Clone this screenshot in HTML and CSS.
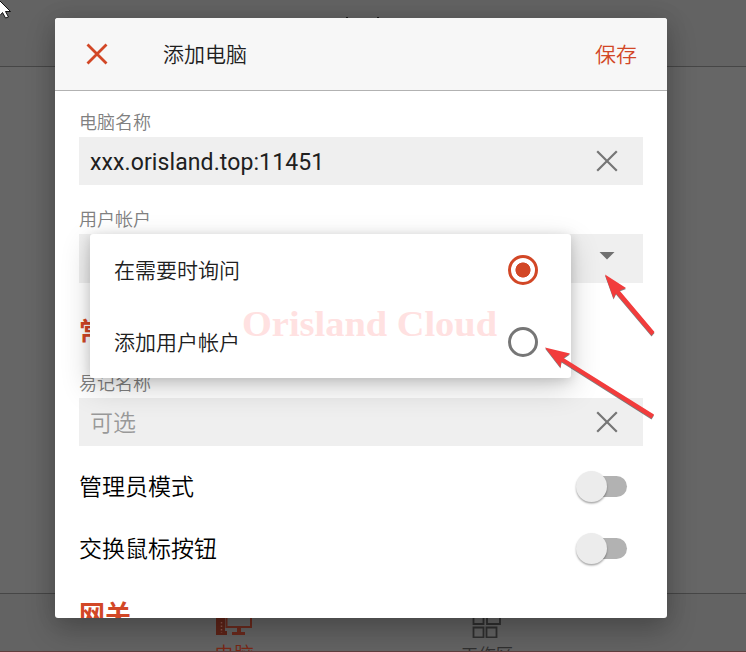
FILE: index.html
```
<!DOCTYPE html>
<html lang="zh-CN">
<head>
<meta charset="utf-8">
<title>添加电脑</title>
<link rel="stylesheet" href="styles.css">
</head>
<body>
<div class="app">
  <header class="app-bar"><i class="tick"></i><i class="tick"></i></header>
  <main class="app-main"></main>
  <nav class="app-nav">
    <div class="tab tab-active">
      <svg class="tab-icon" width="38" height="30" viewBox="0 0 38 30"><path fill="#5e2418" d="M1 0h9v23h2v4H1z"/><path fill="none" stroke="#6b2a1d" stroke-width="2" d="M11.500 4v15H36V4z"/><path fill="#6b2a1d" d="M22 20h4v4h4v3H17v-3h5z"/><path stroke="#8a5549" stroke-width="1.500" stroke-dasharray="1.500 2" d="M6.500 14v11"/></svg>
      <span>电脑</span>
    </div>
    <div class="tab">
      <svg class="tab-icon" width="34" height="30" viewBox="0 0 34 30"><path fill="none" stroke="#303030" stroke-width="1.800" d="M3.500 6h10v10h-10zM17 6h13v10H17zM3.500 19.500h10v10h-10zM16.500 19.500h10v10h-10z"/></svg>
      <span>工作区</span>
    </div>
  </nav>
</div>

<section class="dialog">
  <header class="dialog-head">
    <svg class="close" width="22" height="22" viewBox="0 0 22 22"><path d="M1.500 1.500l19 19m0-19l-19 19" stroke="#d24726" stroke-width="2.800" fill="none"/></svg>
    <h1>添加电脑</h1>
    <span class="save">保存</span>
  </header>
  <div class="dialog-body">
    <div class="label">电脑名称</div>
    <div class="field"><span class="address">xxx.orisland.top:11451</span><svg class="clear" width="22" height="22" viewBox="0 0 22 22"><path d="M1.200 1.200l19.600 19.600m0-19.600l-19.600 19.600"/></svg></div>
    <div class="label label-account">用户帐户</div>
    <div class="field select"><svg class="caret" width="16" height="8" viewBox="0 0 16 8"><path d="M.5 0h15L8 7.500z" fill="#707070"/></svg></div>
    <h2 class="general">常</h2>
    <div class="label">易记名称</div>
    <div class="field"><span class="hint">可选</span><svg class="clear" width="22" height="22" viewBox="0 0 22 22"><path d="M1.200 1.200l19.600 19.600m0-19.600l-19.600 19.600"/></svg></div>
    <div class="setting setting-first"><span>管理员模式</span><span class="switch"><i class="knob"></i></span></div>
    <div class="setting"><span>交换鼠标按钮</span><span class="switch"><i class="knob"></i></span></div>
    <h2 class="gateway">网关</h2>
  </div>
</section>

<div class="menu">
  <div class="option"><span>在需要时询问</span><i class="radio radio-on"></i></div>
  <div class="option"><span>添加用户帐户</span><i class="radio"></i></div>
</div>

<svg class="overlay" width="746" height="652" viewBox="0 0 746 652">
  <text class="watermark" x="242" y="335.500" textLength="255" lengthAdjust="spacingAndGlyphs">Orisland Cloud</text>
  <g class="arrow">
    <path d="M605 274.500L626 288l-6.500 2.500L654.500 332l-3 3.500L616 293.500l-2.500 5z"/>
    <path d="M545 347.500l25 6-6.500 4.500 90.500 56.500-2.500 4L561.500 361.500l-1 6z"/>
  </g>
  <path class="cursor" d="M-8 -7L10.500 11.500H5.500L8.500 17 5.500 18 2.500 12.500 0 15.500H-8z"/>
</svg>
</body>
</html>
```
FILE: styles.css
```
* { box-sizing: border-box; }
body {
  margin: 0;
  width: 746px;
  height: 652px;
  overflow: hidden;
  position: relative;
  font-family: Roboto, "Noto Sans CJK SC", sans-serif;
  font-weight: 350;
  color: #202020;
}
.app {
  display: flex;
  flex-direction: column;
  height: 652px;
  background: #666;
}
.app-bar {
  display: flex;
  gap: 29px;
  height: 67px;
  padding: 17px 0 0 346px;
  background: #636363;
  border-bottom: 1px solid #464646;
}
.tick { width: 2px; height: 1px; background: #171717; }
.app-main { flex: 1; }
.app-nav {
  display: flex;
  height: 59px;
  background: #636363;
  border-top: 1px solid #464646;
  border-bottom: 1px solid #603e3e;
  padding-left: 108px;
  overflow: hidden;
}
.tab {
  display: flex;
  flex-direction: column;
  align-items: center;
  width: 252px;
  padding-top: 14px;
  font-size: 20px;
  line-height: 34px;
  color: #303030;
}
.tab + .tab { width: 254px; font-size: 17.500px; }
.tab-active { color: #7a2715; }
.tab-icon { flex: none; }
.dialog {
  position: absolute;
  left: 55px;
  top: 18px;
  width: 612px;
  height: 600px;
  border-radius: 3px;
  background: #fff;
  box-shadow: 0 12px 30px rgba(0, 0, 0, .24), 0 0 22px rgba(0, 0, 0, .1);
}
.dialog-head {
  display: flex;
  align-items: center;
  height: 73px;
  padding: 0 30px 0 31px;
  background: #f7f7f7;
  border-bottom: 1px solid #b2b2b2;
  border-radius: 3px 3px 0 0;
}
h1, h2 { margin: 0; }
h1 { margin-left: 55px; flex: 1; font-size: 21px; font-weight: inherit; padding-bottom: 2px; }
.save { font-size: 21px; color: #d24726; padding-bottom: 2px; }
.dialog-body {
  height: 527px;
  padding: 18px 24px 0;
  overflow: hidden;
}
.label {
  height: 28px;
  font-size: 18px;
  line-height: 27px;
  color: #808080;
}
.label-account { margin-top: 21px; }
.field {
  display: flex;
  align-items: center;
  justify-content: space-between;
  height: 48px;
  padding: 0 25px 0 11px;
  font-size: 23px;
  font-weight: 400;
  background: #efefef;
}
.address { letter-spacing: .1px; padding-top: 2px; }
.select { height: 49px; justify-content: flex-end; padding: 0 28px 6px 0; }
.clear { margin-bottom: 1px; }
.clear path { stroke: #767676; stroke-width: 2.200; }
.hint { color: #999; font-weight: 350; padding-bottom: 2px; }
h2 { font-size: 26px; line-height: 36px; font-weight: 700; color: #d24726; }
.general { margin: 31px 0 20px; }
.gateway { margin-top: 18px; }
.setting {
  display: flex;
  align-items: center;
  justify-content: space-between;
  height: 62px;
  padding-right: 16px;
  font-size: 23px;
  color: #000;
}
.setting > span:first-child { padding-bottom: 2px; }
.setting-first { margin-top: 9px; }
.switch {
  display: flex;
  align-items: center;
  width: 48px;
  height: 21px;
  border-radius: 11px;
  background: #b2b2b2;
}
.knob {
  width: 31px;
  height: 31px;
  margin-left: -3px;
  border-radius: 50%;
  background: #ececec;
  box-shadow: 0 1.500px 2px rgba(0, 0, 0, .35);
}
.menu {
  position: absolute;
  left: 90px;
  top: 234px;
  width: 481px;
  height: 144px;
  border-radius: 3px;
  background: #fff;
  box-shadow: 0 10px 30px rgba(0, 0, 0, .19), 0 2px 12px rgba(0, 0, 0, .15);
}
.option {
  display: flex;
  align-items: center;
  justify-content: space-between;
  height: 72px;
  padding: 0 33px 0 24px;
  font-size: 21px;
}
.option span { padding-bottom: 2px; }
.radio {
  width: 30px;
  height: 30px;
  border: 3px solid #767676;
  border-radius: 50%;
}
.radio-on {
  border-color: #d24726;
  background: radial-gradient(circle, #d24726 7.200px, transparent 7.900px);
}
.overlay { position: absolute; left: 0; top: 0; pointer-events: none; }
.watermark {
  font: bold 36px "Liberation Serif", serif;
  fill: #ffe1e1;
}
.arrow { fill: #f23c3c; filter: drop-shadow(0 1px 0.500px rgba(0, 0, 0, .5)); }
.cursor { fill: #fff; stroke: #111; stroke-width: 1; }
```
